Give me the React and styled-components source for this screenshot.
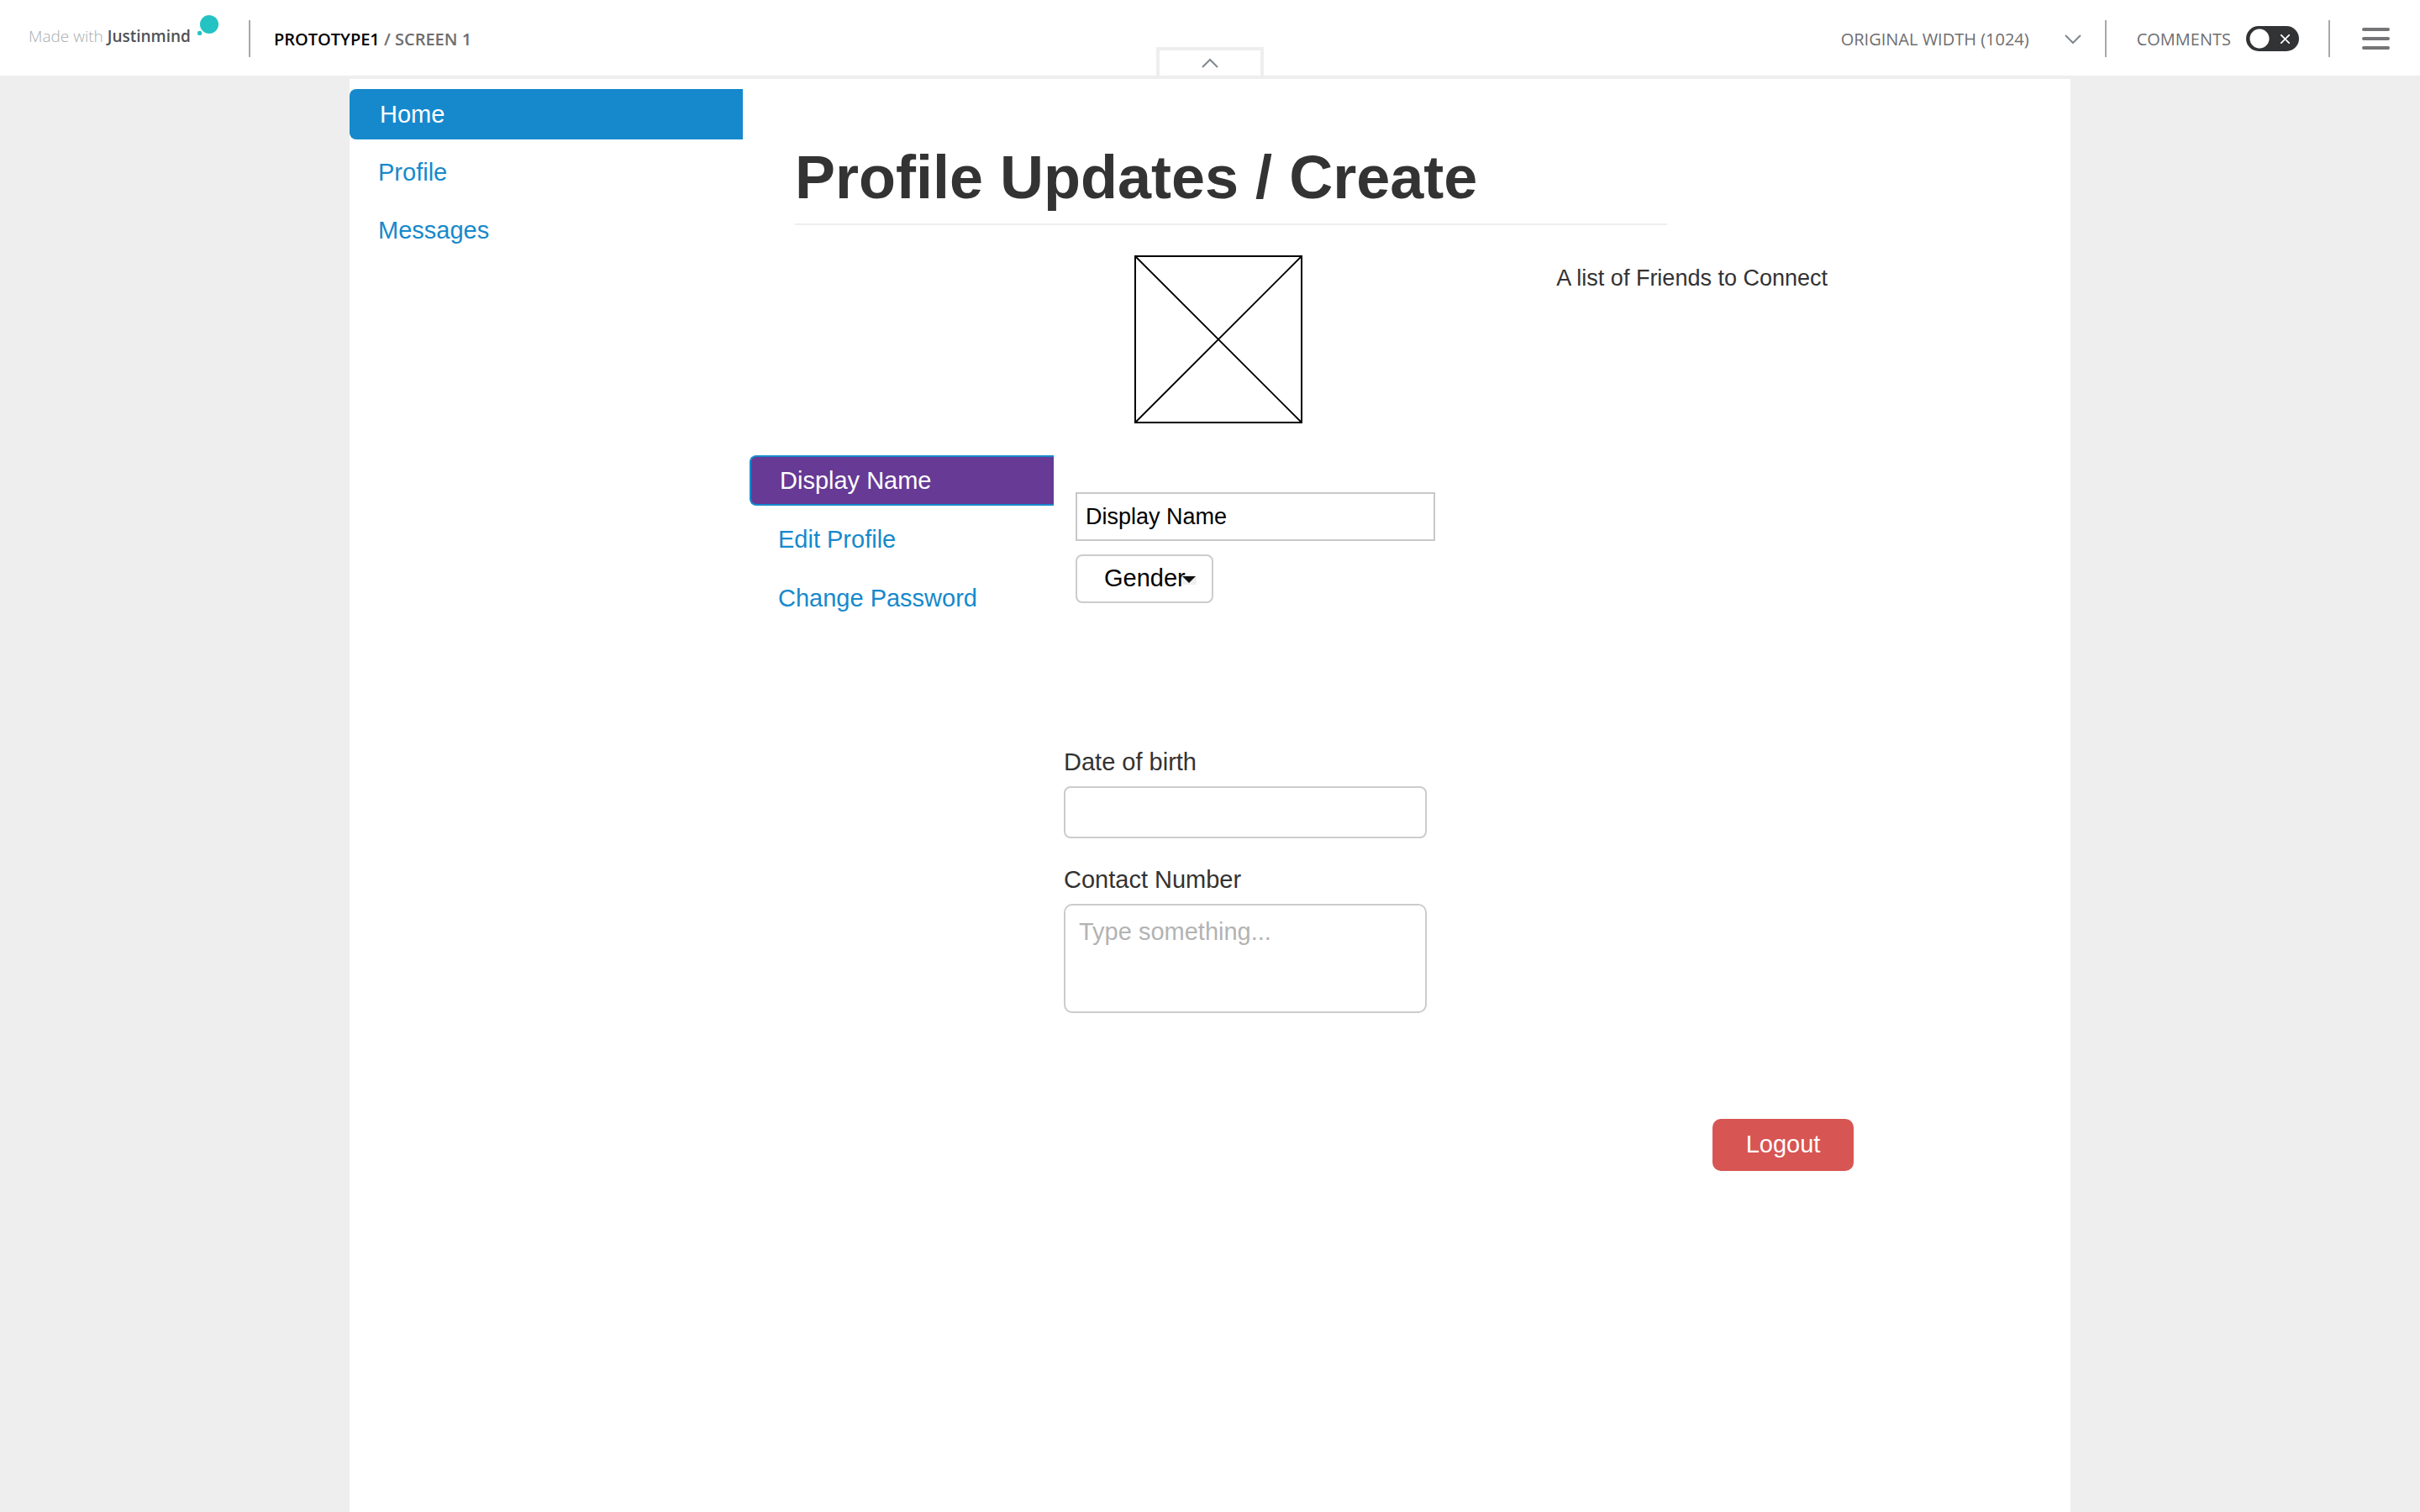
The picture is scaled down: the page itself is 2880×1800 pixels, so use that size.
import React from "react";
import styled, { createGlobalStyle } from "styled-components";

const GlobalStyle = createGlobalStyle`
  * { box-sizing: border-box; }
  body {
    margin: 0;
    background: #eeeeee;
    font-family: "Liberation Sans", Arial, sans-serif;
    font-size: 29px;
    line-height: 34px;
    color: #333333;
  }
  input, select, textarea, button { font: inherit; margin: 0; }
`;

const Page = styled.div`
  min-height: 100vh;
  display: flex;
  flex-direction: column;
`;

const TopBar = styled.header`
  position: relative;
  display: flex;
  align-items: center;
  justify-content: space-between;
  height: 94px;
  padding: 2px 36px 0 34px;
  background: #ffffff;
  border-bottom: 4px solid #eeeeee;
  font-family: "Open Sans", sans-serif;
  font-size: 20px;
  line-height: 28px;
  color: #6e6e70;
`;

const BarGroup = styled.div`
  display: flex;
  align-items: center;
`;

const Brand = styled.a`
  display: flex;
  align-items: center;
  height: 60px;
  color: #a9acae;
  font-size: 19px;
  font-weight: 300;
  text-decoration: none;
  white-space: pre;
  padding-bottom: 6px;
`;

const BrandName = styled.span`
  color: #4f5356;
  font-weight: 600;
`;

const BrandDots = styled.svg`
  width: 26px;
  height: 26px;
  margin: 0 0 26px 8px;
`;

const Separator = styled.span`
  width: 2px;
  height: 44px;
  margin-left: ${(p) => p.$before}px;
  margin-right: ${(p) => p.$after}px;
  background: #a8a8a8;
`;

const Crumbs = styled.div`
  padding-top: 2px;
`;

const CrumbProject = styled.span`
  color: #000000;
  font-weight: 600;
`;

const CrumbScreen = styled.span`
  font-weight: 600;
`;

const WidthButton = styled.button`
  display: flex;
  align-items: center;
  gap: 42px;
  padding: 2px 0 0;
  border: 0;
  background: none;
  color: inherit;
`;

const Chevron = styled.svg`
  display: block;
  width: 20px;
  height: 12px;
  fill: none;
  stroke: #808890;
  stroke-width: 2;
`;

const CommentsToggle = styled.label`
  display: flex;
  align-items: center;
  gap: 18px;
`;

const ToggleText = styled.span`
  padding-top: 2px;
`;

const Switch = styled.input`
  appearance: none;
  width: 63px;
  height: 30px;
  border-radius: 15px;
  background:
    radial-gradient(circle at 16px 15px, #ffffff 11px, transparent 12px),
    linear-gradient(45deg, transparent 44%, #ffffff 46%, #ffffff 54%, transparent 56%) 41px 10px / 11px 11px no-repeat,
    linear-gradient(-45deg, transparent 44%, #ffffff 46%, #ffffff 54%, transparent 56%) 41px 10px / 11px 11px no-repeat,
    #323335;
`;

const MenuButton = styled.button`
  display: flex;
  flex-direction: column;
  gap: 7px;
  padding: 0;
  border: 0;
  background: none;
`;

const MenuLine = styled.span`
  width: 33px;
  height: 4px;
  border-radius: 2px;
  background: #757577;
`;

const CollapseTab = styled.button`
  position: absolute;
  left: 50%;
  bottom: 0;
  width: 128px;
  height: 34px;
  margin-left: -64px;
  padding: 0;
  display: flex;
  align-items: center;
  justify-content: center;
  border: 4px solid #eeeeee;
  border-bottom: 0;
  background: #ffffff;
`;

const Canvas = styled.main`
  flex: 1;
  width: 100%;
  max-width: 2048px;
  margin: 0 auto;
  padding-top: 12px;
  display: flex;
  align-items: flex-start;
  background: #ffffff;
`;

const Nav = styled.nav`
  display: flex;
  flex-direction: column;
  gap: ${(p) => p.$gap}px;
  width: ${(p) => p.$width}px;
  flex-shrink: 0;
`;

const NavLink = styled.a`
  display: flex;
  align-items: center;
  height: 60px;
  padding: 0 34px;
  color: #1689cc;
  text-decoration: none;
`;

const ActiveLink = styled(NavLink)`
  border: 2px solid #1689cc;
  border-right: 0;
  border-radius: 8px 0 0 8px;
  background: ${(p) => p.$fill};
  color: #ffffff;
`;

const Content = styled.section`
  flex: 1;
  padding: 64px 258px 0 8px;
`;

const Title = styled.h1`
  max-width: 1038px;
  margin: 0 0 36px 54px;
  padding-bottom: 14px;
  border-bottom: 2px solid #eeeeee;
  font-size: 72px;
  line-height: 82px;
`;

const Overview = styled.div`
  display: flex;
  justify-content: space-between;
  align-items: flex-start;
  padding: 0 31px 0 458px;
`;

const ImagePlaceholder = styled.svg`
  width: 200px;
  height: 200px;
  fill: none;
  stroke: #000000;
`;

const FriendsNote = styled.p`
  margin: 10px 0 0;
  font-size: 27px;
`;

const Editor = styled.div`
  display: flex;
  align-items: flex-start;
  padding-top: 38px;
`;

const Form = styled.form`
  display: flex;
  flex-direction: column;
  width: 442px;
  margin-left: 12px;
`;

const Identity = styled.div`
  display: flex;
  flex-direction: column;
  align-items: flex-start;
  gap: 16px;
  padding: 44px 0 0 14px;
`;

const NameInput = styled.input`
  width: 100%;
  height: 58px;
  padding: 0 10px;
  border: 2px solid #c8c8c8;
  border-radius: 0;
  background: #ffffff;
  color: #000000;
  font-size: 27px;
`;

const SelectBox = styled.div`
  position: relative;
`;

const GenderSelect = styled.select`
  appearance: none;
  display: block;
  width: 164px;
  height: 58px;
  padding: 0 0 2px 32px;
  border: 2px solid #cccccc;
  border-radius: 8px;
  background: #ffffff;
  color: #000000;
`;

const SelectArrow = styled.svg`
  position: absolute;
  right: 20px;
  top: 24px;
  width: 17px;
  height: 12px;
  pointer-events: none;
`;

const Details = styled.div`
  display: flex;
  flex-direction: column;
  width: 432px;
  padding-top: 172px;
`;

const FieldLabel = styled.label`
  height: 34px;
  margin-bottom: 12px;
`;

const TextField = styled.input`
  height: 62px;
  margin-bottom: 32px;
  padding: 0 16px;
  border: 2px solid #cccccc;
  border-radius: 8px;
  background: #ffffff;
`;

const TextArea = styled.textarea`
  height: 130px;
  padding: 14px 16px;
  border: 2px solid #cccccc;
  border-radius: 10px;
  background: #ffffff;
  resize: none;
  &::placeholder { color: #b3b3b3; }
`;

const Footer = styled.div`
  display: flex;
  justify-content: flex-end;
  padding-top: 126px;
`;

const LogoutButton = styled.button`
  width: 168px;
  height: 62px;
  padding: 0 0 2px;
  border: 0;
  border-radius: 10px;
  background: #d75553;
  color: #ffffff;
`;

export default function App() {
  return (
    <Page>
      <GlobalStyle />
      <TopBar>
        <BarGroup>
          <Brand href="#">
            Made with <BrandName>Justinmind</BrandName>
            <BrandDots viewBox="0 0 26 26" aria-hidden="true">
              <circle cx="14" cy="12" r="11" fill="#23c3c3" />
              <circle cx="2.6" cy="22.4" r="2.6" fill="#23c3c3" />
            </BrandDots>
          </Brand>
          <Separator $before={35} $after={28} />
          <Crumbs>
            <CrumbProject>PROTOTYPE1</CrumbProject> <CrumbScreen>/ SCREEN 1</CrumbScreen>
          </Crumbs>
        </BarGroup>
        <BarGroup>
          <WidthButton type="button">
            ORIGINAL WIDTH (1024)
            <Chevron viewBox="0 0 20 12" aria-hidden="true">
              <path d="M1 1L10 10L19 1" />
            </Chevron>
          </WidthButton>
          <Separator $before={28} $after={36} />
          <CommentsToggle>
            <ToggleText>COMMENTS</ToggleText>
            <Switch type="checkbox" role="switch" />
          </CommentsToggle>
          <Separator $before={35} $after={38} />
          <MenuButton type="button" aria-label="Menu">
            <MenuLine />
            <MenuLine />
            <MenuLine />
          </MenuButton>
        </BarGroup>
        <CollapseTab type="button" aria-label="Collapse">
          <Chevron viewBox="0 0 20 12" aria-hidden="true">
            <path d="M1 11L10 2L19 11" />
          </Chevron>
        </CollapseTab>
      </TopBar>
      <Canvas>
        <Nav $gap={9} $width={468} aria-label="Main">
          <ActiveLink href="#" $fill="#1689cc">Home</ActiveLink>
          <NavLink href="#">Profile</NavLink>
          <NavLink href="#">Messages</NavLink>
        </Nav>
        <Content>
          <Title>Profile Updates / Create</Title>
          <Overview>
            <ImagePlaceholder viewBox="0 0 200 200" aria-hidden="true">
              <rect x="1" y="1" width="198" height="198" strokeWidth="2" />
              <path d="M1 1L199 199M199 1L1 199" strokeWidth="1.8" />
            </ImagePlaceholder>
            <FriendsNote>A list of Friends to Connect</FriendsNote>
          </Overview>
          <Editor>
            <Nav $gap={10} $width={362} aria-label="Profile">
              <ActiveLink href="#" $fill="#663a95">Display Name</ActiveLink>
              <NavLink href="#">Edit Profile</NavLink>
              <NavLink href="#">Change Password</NavLink>
            </Nav>
            <Form>
              <Identity>
                <NameInput type="text" aria-label="Display Name" defaultValue="Display Name" />
                <SelectBox>
                  <GenderSelect aria-label="Gender" defaultValue="Gender">
                    <option>Gender</option>
                  </GenderSelect>
                  <SelectArrow viewBox="0 0 17 12" aria-hidden="true">
                    <rect x="0" y="2" width="17" height="10" fill="#f0f0f0" />
                    <path d="M0 2H16L8 10Z" fill="#111111" />
                  </SelectArrow>
                </SelectBox>
              </Identity>
              <Details>
                <FieldLabel htmlFor="dob">Date of birth</FieldLabel>
                <TextField id="dob" type="text" />
                <FieldLabel htmlFor="contact">Contact Number</FieldLabel>
                <TextArea id="contact" placeholder="Type something..." />
              </Details>
            </Form>
          </Editor>
          <Footer>
            <LogoutButton type="button">Logout</LogoutButton>
          </Footer>
        </Content>
      </Canvas>
    </Page>
  );
}
